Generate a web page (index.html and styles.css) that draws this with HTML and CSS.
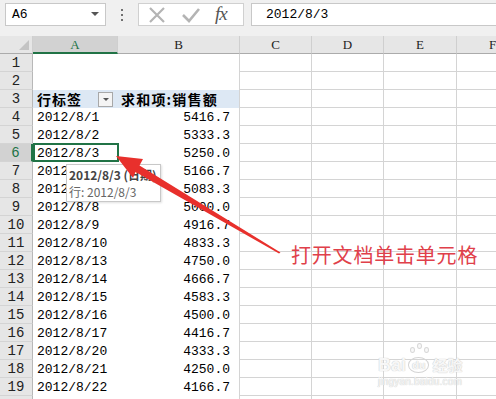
FILE: index.html
```html
<!DOCTYPE html>
<html>
<head>
<meta charset="utf-8">
<link rel="stylesheet" href="styles.css">
</head>
<body>
<div class="app">
  <div class="toolbar">
    <div class="namebox"><span class="nb-text">A6</span><span class="caret"></span></div>
    <div class="dots"><i></i><i></i><i></i></div>
    <div class="fxbtns">
      <svg class="ic-x" width="18" height="18" viewBox="0 0 18 18"><path d="M2 2 L16 16 M16 2 L2 16" stroke="#b4b4b4" stroke-width="2.2" fill="none"/></svg>
      <svg class="ic-ok" width="20" height="18" viewBox="0 0 20 18"><path d="M2 9 L8 15 L18 3" stroke="#b4b4b4" stroke-width="2.6" fill="none"/></svg>
      <span class="fx">fx</span>
    </div>
    <div class="formula">2012/8/3</div>
  </div>
  <div class="sheet">
    <div class="corner"><span class="tri"></span></div>
    <div class="colh active">A</div>
    <div class="colh">B</div>
    <div class="colh">C</div>
    <div class="colh">D</div>
    <div class="colh">E</div>
    <div class="colh">F</div>
    <div class="colh">G</div>

    <div class="rowh">1</div><div class="ca"></div><div class="cb"></div><div class="cg"></div><div class="cg"></div><div class="cg"></div><div class="cg"></div><div class="cg"></div>
    <div class="rowh">2</div><div class="ca"></div><div class="cb"></div><div class="cg"></div><div class="cg"></div><div class="cg"></div><div class="cg"></div><div class="cg"></div>
    <div class="rowh">3</div><div class="ca pv">行标签<span class="dd"><span class="ddtri"></span></span></div><div class="cb pv">求和项:销售额</div><div class="cg"></div><div class="cg"></div><div class="cg"></div><div class="cg"></div><div class="cg"></div>
    <div class="rowh">4</div><div class="ca">2012/8/1</div><div class="cb">5416.7</div><div class="cg"></div><div class="cg"></div><div class="cg"></div><div class="cg"></div><div class="cg"></div>
    <div class="rowh">5</div><div class="ca">2012/8/2</div><div class="cb">5333.3</div><div class="cg"></div><div class="cg"></div><div class="cg"></div><div class="cg"></div><div class="cg"></div>
    <div class="rowh active">6</div><div class="ca sel">2012/8/3<span class="selbox"></span></div><div class="cb">5250.0</div><div class="cg"></div><div class="cg"></div><div class="cg"></div><div class="cg"></div><div class="cg"></div>
    <div class="rowh">7</div><div class="ca">2012/8/6</div><div class="cb">5166.7</div><div class="cg"></div><div class="cg"></div><div class="cg"></div><div class="cg"></div><div class="cg"></div>
    <div class="rowh">8</div><div class="ca">2012/8/7</div><div class="cb">5083.3</div><div class="cg"></div><div class="cg"></div><div class="cg"></div><div class="cg"></div><div class="cg"></div>
    <div class="rowh">9</div><div class="ca">2012/8/8</div><div class="cb">5000.0</div><div class="cg"></div><div class="cg"></div><div class="cg"></div><div class="cg"></div><div class="cg"></div>
    <div class="rowh">10</div><div class="ca">2012/8/9</div><div class="cb">4916.7</div><div class="cg"></div><div class="cg"></div><div class="cg"></div><div class="cg"></div><div class="cg"></div>
    <div class="rowh">11</div><div class="ca">2012/8/10</div><div class="cb">4833.3</div><div class="cg"></div><div class="cg"></div><div class="cg"></div><div class="cg"></div><div class="cg"></div>
    <div class="rowh">12</div><div class="ca">2012/8/13</div><div class="cb">4750.0</div><div class="cg"></div><div class="cg"></div><div class="cg"></div><div class="cg"></div><div class="cg"></div>
    <div class="rowh">13</div><div class="ca">2012/8/14</div><div class="cb">4666.7</div><div class="cg"></div><div class="cg"></div><div class="cg"></div><div class="cg"></div><div class="cg"></div>
    <div class="rowh">14</div><div class="ca">2012/8/15</div><div class="cb">4583.3</div><div class="cg"></div><div class="cg"></div><div class="cg"></div><div class="cg"></div><div class="cg"></div>
    <div class="rowh">15</div><div class="ca">2012/8/16</div><div class="cb">4500.0</div><div class="cg"></div><div class="cg"></div><div class="cg"></div><div class="cg"></div><div class="cg"></div>
    <div class="rowh">16</div><div class="ca">2012/8/17</div><div class="cb">4416.7</div><div class="cg"></div><div class="cg"></div><div class="cg"></div><div class="cg"></div><div class="cg"></div>
    <div class="rowh">17</div><div class="ca">2012/8/20</div><div class="cb">4333.3</div><div class="cg"></div><div class="cg"></div><div class="cg"></div><div class="cg"></div><div class="cg"></div>
    <div class="rowh">18</div><div class="ca">2012/8/21</div><div class="cb">4250.0</div><div class="cg"></div><div class="cg"></div><div class="cg"></div><div class="cg"></div><div class="cg"></div>
    <div class="rowh">19</div><div class="ca">2012/8/22</div><div class="cb">4166.7</div><div class="cg"></div><div class="cg"></div><div class="cg"></div><div class="cg"></div><div class="cg"></div>
    <div class="rowh r20"></div><div class="ca"></div><div class="cb"></div><div class="cg"></div><div class="cg"></div><div class="cg"></div><div class="cg"></div><div class="cg"></div>
  </div>

  <div class="tooltip">
    <div class="tt-title">2012/8/3 (日期)</div>
    <div class="tt-sub">行: 2012/8/3</div>
  </div>

  <svg class="arrow" width="496" height="399" viewBox="0 0 496 399">
    <polygon fill="#e8302c" points="116,156 143,159 139.5,165.5 280.5,252.5 279,253.6 135.5,172 133,178"/>
  </svg>

  <div class="note">打开文档单击单元格</div>

  <div class="watermark">
    <div class="wm-logo"><span>Bai</span><span class="wm-paw"><i class="p1"></i><i class="p2"></i><i class="p3"></i><span class="wm-du">du</span></span><span class="wm-cn">经验</span></div>
    <div class="wm-url">jingyan.baidu.com</div>
  </div>
</div>
</body>
</html>
```
FILE: styles.css
```css
* { box-sizing: border-box; }
html, body { margin: 0; padding: 0; }
body {
  width: 496px;
  height: 399px;
  overflow: hidden;
  background: #ffffff;
  font-family: "Liberation Mono", "Noto Sans CJK SC", monospace;
}
.app {
  position: relative;
  width: 496px;
  height: 399px;
  overflow: hidden;
}
.toolbar {
  height: 36px;
  background: #f0f0f0;
  display: flex;
  align-items: flex-start;
  padding: 3px 0 0 5px;
}
.namebox {
  width: 101px;
  height: 23px;
  background: #fff;
  border: 1px solid #c8c8c8;
  display: flex;
  align-items: center;
  justify-content: space-between;
  padding: 0 6px 0 6px;
  font-size: 13px;
  color: #000;
}
.caret {
  width: 0;
  height: 0;
  border-left: 4px solid transparent;
  border-right: 4px solid transparent;
  border-top: 4px solid #555;
  margin-top: -2px;
}
.dots {
  width: 4px;
  height: 23px;
  margin-left: 14px;
  display: flex;
  flex-direction: column;
  justify-content: center;
  gap: 3px;
  align-items: center;
}
.dots i {
  display: block;
  width: 2px;
  height: 2px;
  background: #707070;
}
.fxbtns {
  margin-left: 14px;
  width: 106px;
  height: 23px;
  background: #fff;
  border: 1px solid #d0d0d0;
  display: flex;
  align-items: center;
  padding-left: 9px;
}
.ic-x { margin-right: 15px; }
.ic-ok { margin-right: 14px; }
.fx {
  font-family: "Liberation Serif", serif;
  font-style: italic;
  font-size: 19px;
  color: #555;
  letter-spacing: -1px;
  margin-top: -2px;
}
.formula {
  margin-left: 7px;
  flex: 1;
  margin-right: -10px;
  height: 23px;
  background: #fff;
  border: 1px solid #c8c8c8;
  font-size: 13px;
  line-height: 21px;
  padding-left: 14px;
  color: #000;
}
.sheet {
  display: grid;
  grid-template-columns: 33px 85px 122px 72px 72px 73px 72px 72px;
  grid-auto-rows: 18px;
  font-size: 13px;
  color: #000;
}
.corner {
  background: #e6e6e6;
  border-right: 1px solid #cfcfcf;
  border-bottom: 1px solid #ababab;
  position: relative;
}
.tri {
  position: absolute;
  right: 3px;
  bottom: 3px;
  width: 0;
  height: 0;
  border-left: 10px solid transparent;
  border-bottom: 10px solid #c4c4c4;
}
.colh {
  background: #e6e6e6;
  border-right: 1px solid #cfcfcf;
  border-bottom: 1px solid #ababab;
  text-align: center;
  line-height: 17px;
  font-family: "Liberation Serif", serif;
  font-size: 13px;
  color: #222;
}
.colh.active {
  background: #d2d2d2;
  color: #217346;
  border-bottom: 2px solid #217346;
}
.rowh {
  background: #e6e6e6;
  border-right: 1px solid #b8b8b8;
  border-bottom: 1px solid #d4d4d4;
  text-align: center;
  line-height: 18px;
  font-size: 14px;
  color: #222;
}
.rowh.active {
  background: #d2d2d2;
  color: #217346;
  border-right: 2px solid #217346;
}
.ca {
  padding-left: 4px;
  line-height: 19px;
  white-space: nowrap;
  position: relative;
  font-size: 13px;
}
.cb {
  border-right: 1px solid #d4d4d4;
  text-align: right;
  padding-right: 9px;
  line-height: 19px;
  white-space: nowrap;
}
.cg {
  border-right: 1px solid #d4d4d4;
  border-bottom: 1px solid #d4d4d4;
}
.pv {
  background: #dde8f4;
  font-family: "Noto Sans CJK SC", sans-serif;
  font-weight: bold;
  font-size: 14px;
  line-height: 18px;
}
.ca.pv {
  display: flex;
  align-items: center;
  letter-spacing: 1px;
}
.cb.pv {
  text-align: left;
  padding-left: 3px;
  padding-right: 0;
  letter-spacing: 1.2px;
}
.dd {
  margin-left: 16px;
  width: 15px;
  height: 15px;
  border: 1px solid #a8a8a8;
  background: #f4f4f4;
  display: flex;
  align-items: center;
  justify-content: center;
}
.ddtri {
  width: 0;
  height: 0;
  border-left: 3px solid transparent;
  border-right: 3px solid transparent;
  border-top: 3px solid #555;
}
.selbox {
  position: absolute;
  left: 0;
  top: -1px;
  right: -1px;
  bottom: 0;
  border: 2px solid #217346;
}
.tooltip {
  position: absolute;
  left: 66px;
  top: 164px;
  width: 95px;
  height: 38px;
  background: #fff;
  border: 1px solid #c8c8c8;
  box-shadow: 1px 1px 2px rgba(0,0,0,0.12);
  font-family: "Noto Sans CJK SC", sans-serif;
  font-size: 12px;
  color: #555;
  padding: 1px 0 0 2px;
  white-space: nowrap;
  overflow: hidden;
}
.tt-title {
  font-weight: bold;
  line-height: 17px;
  color: #444;
}
.tt-sub {
  line-height: 17px;
  color: #666;
}
.arrow {
  position: absolute;
  left: 0;
  top: 0;
}
.note {
  position: absolute;
  left: 291px;
  top: 240px;
  font-family: "Noto Sans CJK SC", sans-serif;
  font-size: 20px;
  letter-spacing: 0.8px;
  color: #e0404a;
  white-space: nowrap;
}
.watermark {
  position: absolute;
  left: 378px;
  top: 352px;
  width: 92px;
  color: #f7f7f7;
  font-family: "Liberation Sans", "Noto Sans CJK SC", sans-serif;
  text-shadow: 0 0 1px #c8c8c8, 0 0 1px #d8d8d8;
}
.wm-logo {
  display: flex;
  align-items: flex-end;
  font-size: 18px;
  font-weight: bold;
  line-height: 22px;
  white-space: nowrap;
}
.wm-paw {
  position: relative;
  margin: 0 3px 2px 2px;
}
.wm-paw i {
  position: absolute;
  width: 5px;
  height: 6px;
  border-radius: 50%;
  border: 1px solid #d8d8d8;
  background: #f8f8f8;
}
.wm-paw .p1 { left: 2px; top: -5px; }
.wm-paw .p2 { left: 9px; top: -9px; }
.wm-paw .p3 { left: 16px; top: -5px; }
.wm-du {
  display: inline-block;
  font-size: 11px;
  line-height: 12px;
  border: 1px solid #d4d4d4;
  border-radius: 50%;
  padding: 1px 3px;
}
.wm-cn {
  font-family: "Noto Sans CJK SC", sans-serif;
  font-size: 15px;
}
.wm-url {
  font-size: 10px;
  line-height: 12px;
  letter-spacing: 0.2px;
  white-space: nowrap;
}
```
